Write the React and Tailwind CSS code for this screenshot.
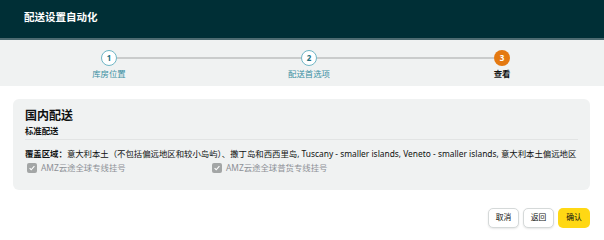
import React from 'react';

const steps = [
  { n: 1, label: '库房位置', state: 'done' },
  { n: 2, label: '配送首选项', state: 'done' },
  { n: 3, label: '查看', state: 'active' },
];

const Step = ({ step }) => {
  const active = step.state === 'active';
  return (
    <div className="flex w-[16px] shrink-0 flex-col items-center">
      <div
        className={`flex h-[16px] w-[16px] items-center justify-center rounded-full text-[8px] font-bold leading-none ${
          active
            ? 'bg-[#e47911] text-white'
            : 'border-[1.5px] border-[#6fb6c5] bg-white text-[#24707f]'
        }`}
      >
        {step.n}
      </div>
      <span
        className={`mt-[2px] whitespace-nowrap text-[8.4px] leading-[12px] ${
          active ? 'font-bold text-[#0f1111]' : 'text-[#3a8fa2]'
        }`}
      >
        {step.label}
      </span>
    </div>
  );
};

const Check = ({ label, className = '' }) => (
  <div className={`flex items-center gap-[4px] ${className}`}>
    <span className="flex h-[10px] w-[10px] items-center justify-center rounded-[2px] bg-[#a3a6a6]">
      <svg viewBox="0 0 10 10" className="h-[8px] w-[8px]">
        <path d="M2 5.2l2 2 4-4.4" fill="none" stroke="white" strokeWidth="1.4" />
      </svg>
    </span>
    <span className="text-[8.4px] leading-[12px] text-[#8d9096]">{label}</span>
  </div>
);

export default function App() {
  return (
    <div className="h-[240px] w-full overflow-hidden bg-white font-['Noto_Sans','Noto_Sans_CJK_SC',sans-serif]">
      {/* header */}
      <header className="flex h-[40px] items-center border-b-2 border-[#4d6b71] bg-[#002f36] px-[24px] pb-[3px]">
        <h1 className="text-[10.5px] font-bold text-white">配送设置自动化</h1>
      </header>

      {/* stepper */}
      <div className="flex h-[46px] items-start bg-[#f0f2f2] pl-[101px] pt-[10px]">
        <Step step={steps[0]} />
        <div className="mt-[7px] h-[2px] w-[184px] bg-[#cacccc]" />
        <Step step={steps[1]} />
        <div className="mt-[7px] h-[2px] w-[177px] bg-[#cacccc]" />
        <Step step={steps[2]} />
      </div>

      {/* card */}
      <div className="mx-[13px] mr-[14px] mt-[13px] h-[91px] rounded-[6px] bg-[#f0f2f2] px-[12px] pt-[9px]">
        <h2 className="text-[12px] font-bold leading-[16px] text-[#0f1111]">国内配送</h2>
        <p className="mt-[1px] text-[8.4px] font-semibold leading-[12px] text-[#0f1111]">标准配送</p>
        <div className="mt-[2px] h-px bg-[#e2e4e4]" />
        <p className="mt-[8px] whitespace-nowrap text-[8.4px] leading-[12px] text-[#0f1111]">
          <span className="font-bold">覆盖区域：</span>
          意大利本土（不包括偏远地区和较小岛屿）、撒丁岛和西西里岛, Tuscany - smaller islands, Veneto - smaller islands, 意大利本土偏远地区
        </p>
        <div className="mt-[2px] flex pl-[2px]">
          <Check label="AMZ云途全球专线挂号" className="w-[185px]" />
          <Check label="AMZ云途全球普货专线挂号" />
        </div>
      </div>

      {/* actions */}
      <div className="mt-[18px] flex justify-end gap-[4px] pr-[14px]">
        <button className="h-[20px] w-[31px] rounded-[5px] border border-[#d5d9d9] bg-white text-[7.8px] text-[#0f1111] shadow-[0_1px_2px_rgba(15,17,17,0.1)]">
          取消
        </button>
        <button className="h-[20px] w-[31px] rounded-[5px] border border-[#d5d9d9] bg-white text-[7.8px] text-[#0f1111] shadow-[0_1px_2px_rgba(15,17,17,0.1)]">
          返回
        </button>
        <button className="h-[20px] w-[32px] rounded-[5px] bg-[#ffd814] text-[7.8px] text-[#0f1111]">
          确认
        </button>
      </div>
    </div>
  );
}
